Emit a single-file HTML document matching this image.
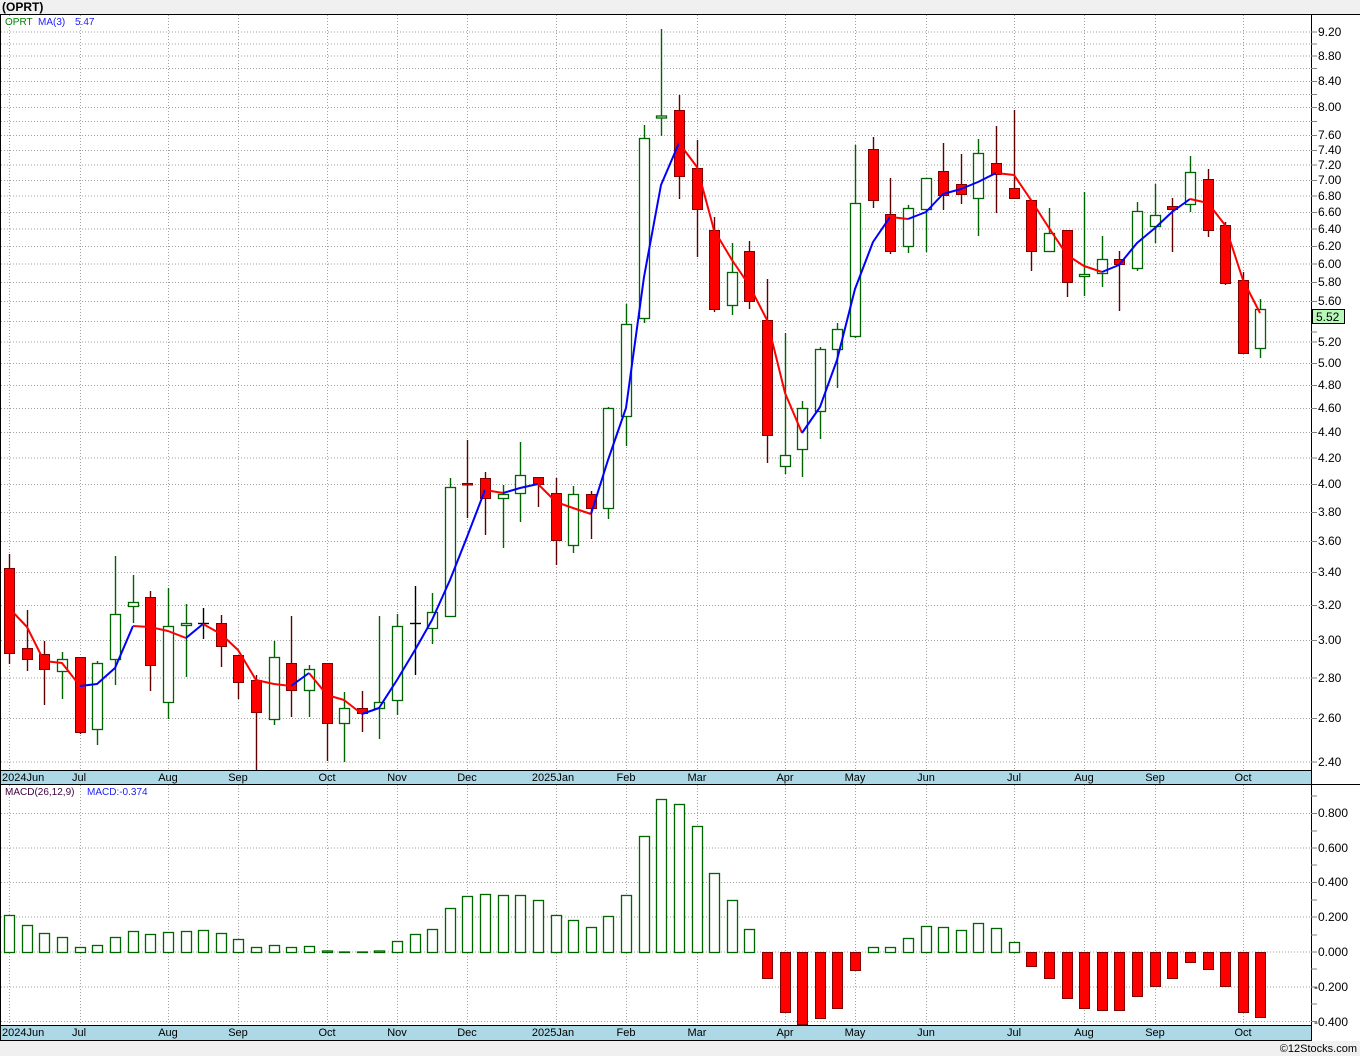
<!DOCTYPE html>
<html><head><meta charset="utf-8"><style>
html,body{margin:0;padding:0;background:#f0f0f0;}
svg{display:block;font-family:"Liberation Sans",sans-serif;}
</style></head><body>
<svg width="1360" height="1056" viewBox="0 0 1360 1056" xmlns="http://www.w3.org/2000/svg">
<rect x="0" y="0" width="1360" height="1056" fill="#f0f0f0"/>
<text x="2" y="11" font-size="12" font-weight="bold" fill="#000">(OPRT)</text>
<rect x="0" y="14" width="1360" height="1027" fill="#fff"/>
<!-- price grid -->
<g stroke="#a0a0a0" stroke-width="1" stroke-dasharray="1,2">
<line x1="1" x2="1311" y1="32" y2="32"/><line x1="1" x2="1311" y1="44" y2="44"/><line x1="1" x2="1311" y1="56" y2="56"/><line x1="1" x2="1311" y1="68.5" y2="68.5"/><line x1="1" x2="1311" y1="81.5" y2="81.5"/><line x1="1" x2="1311" y1="94.5" y2="94.5"/><line x1="1" x2="1311" y1="107.5" y2="107.5"/><line x1="1" x2="1311" y1="121.5" y2="121.5"/><line x1="1" x2="1311" y1="135.5" y2="135.5"/><line x1="1" x2="1311" y1="150.5" y2="150.5"/><line x1="1" x2="1311" y1="165" y2="165"/><line x1="1" x2="1311" y1="180.5" y2="180.5"/><line x1="1" x2="1311" y1="196" y2="196"/><line x1="1" x2="1311" y1="212.5" y2="212.5"/><line x1="1" x2="1311" y1="229" y2="229"/><line x1="1" x2="1311" y1="246.5" y2="246.5"/><line x1="1" x2="1311" y1="264" y2="264"/><line x1="1" x2="1311" y1="282.5" y2="282.5"/><line x1="1" x2="1311" y1="301.5" y2="301.5"/><line x1="1" x2="1311" y1="321.5" y2="321.5"/><line x1="1" x2="1311" y1="342" y2="342"/><line x1="1" x2="1311" y1="363.5" y2="363.5"/><line x1="1" x2="1311" y1="385.5" y2="385.5"/><line x1="1" x2="1311" y1="408.5" y2="408.5"/><line x1="1" x2="1311" y1="432.5" y2="432.5"/><line x1="1" x2="1311" y1="458" y2="458"/><line x1="1" x2="1311" y1="484.5" y2="484.5"/><line x1="1" x2="1311" y1="512.5" y2="512.5"/><line x1="1" x2="1311" y1="541.5" y2="541.5"/><line x1="1" x2="1311" y1="572.5" y2="572.5"/><line x1="1" x2="1311" y1="605.5" y2="605.5"/><line x1="1" x2="1311" y1="640.5" y2="640.5"/><line x1="1" x2="1311" y1="678" y2="678"/><line x1="1" x2="1311" y1="718.5" y2="718.5"/><line x1="1" x2="1311" y1="762" y2="762"/>
<!-- vertical month grid -->
<g>
<line x1="9.5" x2="9.5" y1="15" y2="770"/><line x1="80.5" x2="80.5" y1="15" y2="770"/><line x1="168.5" x2="168.5" y1="15" y2="770"/><line x1="238.5" x2="238.5" y1="15" y2="770"/><line x1="327.5" x2="327.5" y1="15" y2="770"/><line x1="397.5" x2="397.5" y1="15" y2="770"/><line x1="467.5" x2="467.5" y1="15" y2="770"/><line x1="556.5" x2="556.5" y1="15" y2="770"/><line x1="626.5" x2="626.5" y1="15" y2="770"/><line x1="697.5" x2="697.5" y1="15" y2="770"/><line x1="785.5" x2="785.5" y1="15" y2="770"/><line x1="855.5" x2="855.5" y1="15" y2="770"/><line x1="926.5" x2="926.5" y1="15" y2="770"/><line x1="1014.5" x2="1014.5" y1="15" y2="770"/><line x1="1084.5" x2="1084.5" y1="15" y2="770"/><line x1="1155.5" x2="1155.5" y1="15" y2="770"/><line x1="1243.5" x2="1243.5" y1="15" y2="770"/>
<line x1="9.5" x2="9.5" y1="785" y2="1025"/><line x1="80.5" x2="80.5" y1="785" y2="1025"/><line x1="168.5" x2="168.5" y1="785" y2="1025"/><line x1="238.5" x2="238.5" y1="785" y2="1025"/><line x1="327.5" x2="327.5" y1="785" y2="1025"/><line x1="397.5" x2="397.5" y1="785" y2="1025"/><line x1="467.5" x2="467.5" y1="785" y2="1025"/><line x1="556.5" x2="556.5" y1="785" y2="1025"/><line x1="626.5" x2="626.5" y1="785" y2="1025"/><line x1="697.5" x2="697.5" y1="785" y2="1025"/><line x1="785.5" x2="785.5" y1="785" y2="1025"/><line x1="855.5" x2="855.5" y1="785" y2="1025"/><line x1="926.5" x2="926.5" y1="785" y2="1025"/><line x1="1014.5" x2="1014.5" y1="785" y2="1025"/><line x1="1084.5" x2="1084.5" y1="785" y2="1025"/><line x1="1155.5" x2="1155.5" y1="785" y2="1025"/><line x1="1243.5" x2="1243.5" y1="785" y2="1025"/>
</g>
<!-- macd grid -->
<line x1="1" x2="1311" y1="813.5" y2="813.5"/><line x1="1" x2="1311" y1="848" y2="848"/><line x1="1" x2="1311" y1="882.5" y2="882.5"/><line x1="1" x2="1311" y1="917" y2="917"/><line x1="1" x2="1311" y1="952" y2="952"/><line x1="1" x2="1311" y1="987" y2="987"/><line x1="1" x2="1311" y1="1021.5" y2="1021.5"/>
</g>
<!-- legends -->
<text x="5" y="25" font-size="10" fill="#008000">OPRT</text>
<text x="38" y="25" font-size="10" fill="#2020ff">MA(3)</text>
<text x="75" y="25" font-size="10" fill="#2020ff">5.47</text>
<text x="5" y="795" font-size="10" fill="#400040">MACD(26,12,9)</text>
<text x="87" y="795" font-size="10" fill="#2020ff">MACD:-0.374</text>

<!-- candles: wicks -->
<g stroke-width="1.4">
<g stroke="#600000">
<line x1="9.5" x2="9.5" y1="554" y2="664"/><line x1="27.5" x2="27.5" y1="610" y2="671"/><line x1="44.5" x2="44.5" y1="641" y2="705"/><line x1="80.5" x2="80.5" y1="657" y2="734"/><line x1="150.5" x2="150.5" y1="591" y2="691"/><line x1="221.5" x2="221.5" y1="615" y2="667"/><line x1="238.5" x2="238.5" y1="655" y2="699"/><line x1="256.5" x2="256.5" y1="675" y2="770"/><line x1="291.5" x2="291.5" y1="616" y2="717"/><line x1="327.5" x2="327.5" y1="663" y2="761"/><line x1="362.5" x2="362.5" y1="691" y2="732"/><line x1="467.5" x2="467.5" y1="440" y2="518"/><line x1="485.5" x2="485.5" y1="472" y2="535"/><line x1="538.5" x2="538.5" y1="477" y2="507"/><line x1="556.5" x2="556.5" y1="478" y2="565"/><line x1="591.5" x2="591.5" y1="491" y2="539"/><line x1="679.5" x2="679.5" y1="95" y2="199"/><line x1="697.5" x2="697.5" y1="140" y2="257"/><line x1="714.5" x2="714.5" y1="217" y2="312"/><line x1="749.5" x2="749.5" y1="241" y2="309"/><line x1="767.5" x2="767.5" y1="279" y2="463"/><line x1="873.5" x2="873.5" y1="137" y2="208"/><line x1="890.5" x2="890.5" y1="178" y2="254"/><line x1="943.5" x2="943.5" y1="143" y2="210"/><line x1="961.5" x2="961.5" y1="154" y2="204"/><line x1="996.5" x2="996.5" y1="126" y2="213"/><line x1="1014.5" x2="1014.5" y1="110" y2="198"/><line x1="1031.5" x2="1031.5" y1="200" y2="271"/><line x1="1067.5" x2="1067.5" y1="230" y2="297"/><line x1="1119.5" x2="1119.5" y1="251" y2="311"/><line x1="1172.5" x2="1172.5" y1="198" y2="252"/><line x1="1208.5" x2="1208.5" y1="169" y2="237"/><line x1="1225.5" x2="1225.5" y1="222" y2="285"/><line x1="1243.5" x2="1243.5" y1="272" y2="353"/>
</g>
<g stroke="#006400">
<line x1="62.5" x2="62.5" y1="652" y2="699"/><line x1="97.5" x2="97.5" y1="661" y2="745"/><line x1="115.5" x2="115.5" y1="556" y2="685"/><line x1="133.5" x2="133.5" y1="575" y2="623"/><line x1="168.5" x2="168.5" y1="588" y2="719"/><line x1="186.5" x2="186.5" y1="604" y2="677"/><line x1="274.5" x2="274.5" y1="641" y2="725"/><line x1="309.5" x2="309.5" y1="665" y2="717"/><line x1="344.5" x2="344.5" y1="692" y2="762"/><line x1="379.5" x2="379.5" y1="616" y2="739"/><line x1="397.5" x2="397.5" y1="614" y2="715"/><line x1="432.5" x2="432.5" y1="593" y2="644"/><line x1="450.5" x2="450.5" y1="478" y2="616"/><line x1="503.5" x2="503.5" y1="485" y2="548"/><line x1="520.5" x2="520.5" y1="442" y2="522"/><line x1="573.5" x2="573.5" y1="486" y2="553"/><line x1="608.5" x2="608.5" y1="407" y2="519"/><line x1="626.5" x2="626.5" y1="304" y2="446"/><line x1="644.5" x2="644.5" y1="125" y2="323"/><line x1="661.5" x2="661.5" y1="29" y2="136"/><line x1="732.5" x2="732.5" y1="243" y2="315"/><line x1="785.5" x2="785.5" y1="333" y2="474"/><line x1="802.5" x2="802.5" y1="401" y2="477"/><line x1="820.5" x2="820.5" y1="347" y2="439"/><line x1="837.5" x2="837.5" y1="323" y2="388"/><line x1="855.5" x2="855.5" y1="145" y2="338"/><line x1="908.5" x2="908.5" y1="205" y2="253"/><line x1="926.5" x2="926.5" y1="178" y2="252"/><line x1="978.5" x2="978.5" y1="139" y2="236"/><line x1="1049.5" x2="1049.5" y1="208" y2="252"/><line x1="1084.5" x2="1084.5" y1="192" y2="296"/><line x1="1102.5" x2="1102.5" y1="236" y2="287"/><line x1="1137.5" x2="1137.5" y1="202" y2="271"/><line x1="1155.5" x2="1155.5" y1="184" y2="243"/><line x1="1190.5" x2="1190.5" y1="156" y2="212"/><line x1="1260.5" x2="1260.5" y1="299" y2="358"/>
</g>
<g stroke="#000">
<line x1="203.5" x2="203.5" y1="608" y2="639"/><line x1="198" x2="209" y1="623.5" y2="623.5"/>
<line x1="415.5" x2="415.5" y1="586" y2="675"/><line x1="410" x2="421" y1="623.5" y2="623.5"/>
</g>
</g>
<!-- red bodies -->
<g fill="#ff0000" stroke="#800000" stroke-width="1">
<rect x="4.5" y="568.5" width="10" height="85"/><rect x="22.5" y="648.5" width="10" height="11"/><rect x="39.5" y="654.5" width="10" height="15"/><rect x="75.5" y="657.5" width="10" height="75"/><rect x="145.5" y="597.5" width="10" height="68"/><rect x="216.5" y="623.5" width="10" height="23"/><rect x="233.5" y="655.5" width="10" height="27"/><rect x="251.5" y="680.5" width="10" height="32"/><rect x="286.5" y="663.5" width="10" height="27"/><rect x="322.5" y="663.5" width="10" height="60"/><rect x="357.5" y="708.5" width="10" height="5"/><rect x="462.5" y="483.5" width="10" height="1.5"/><rect x="480.5" y="478.5" width="10" height="20"/><rect x="533.5" y="477.5" width="10" height="7"/><rect x="551.5" y="493.5" width="10" height="47"/><rect x="586.5" y="494.5" width="10" height="14"/><rect x="674.5" y="110.5" width="10" height="66"/><rect x="692.5" y="168.5" width="10" height="41"/><rect x="709.5" y="230.5" width="10" height="79"/><rect x="744.5" y="251.5" width="10" height="50"/><rect x="762.5" y="320.5" width="10" height="115"/><rect x="868.5" y="149.5" width="10" height="51"/><rect x="885.5" y="214.5" width="10" height="37"/><rect x="938.5" y="171.5" width="10" height="24"/><rect x="956.5" y="184.5" width="10" height="10"/><rect x="991.5" y="163.5" width="10" height="11"/><rect x="1009.5" y="188.5" width="10" height="10"/><rect x="1026.5" y="200.5" width="10" height="51"/><rect x="1062.5" y="230.5" width="10" height="52"/><rect x="1114.5" y="259.5" width="10" height="5"/><rect x="1167.5" y="206.5" width="10" height="3"/><rect x="1203.5" y="179.5" width="10" height="51"/><rect x="1220.5" y="225.5" width="10" height="58"/><rect x="1238.5" y="280.5" width="10" height="73"/>
</g>
<!-- green hollow bodies -->
<g fill="#fff" stroke="#006400" stroke-width="1.3">
<rect x="57.5" y="659.5" width="10" height="12"/><rect x="92.5" y="663.5" width="10" height="66"/><rect x="110.5" y="614.5" width="10" height="45"/><rect x="128.5" y="602.5" width="10" height="4"/><rect x="163.5" y="626.5" width="10" height="76"/><rect x="181.5" y="623.5" width="10" height="2"/><rect x="269.5" y="657.5" width="10" height="62"/><rect x="304.5" y="669.5" width="10" height="21"/><rect x="339.5" y="708.5" width="10" height="15"/><rect x="374.5" y="702.5" width="10" height="6"/><rect x="392.5" y="626.5" width="10" height="74"/><rect x="427.5" y="612.5" width="10" height="16"/><rect x="445.5" y="487.5" width="10" height="129"/><rect x="498.5" y="494.5" width="10" height="4"/><rect x="515.5" y="475.5" width="10" height="18"/><rect x="568.5" y="494.5" width="10" height="51"/><rect x="603.5" y="408.5" width="10" height="100"/><rect x="621.5" y="324.5" width="10" height="92"/><rect x="639.5" y="138.5" width="10" height="180"/><rect x="656.5" y="116" width="10" height="2"/><rect x="727.5" y="272.5" width="10" height="33"/><rect x="780.5" y="455.5" width="10" height="11"/><rect x="797.5" y="408.5" width="10" height="41"/><rect x="815.5" y="349.5" width="10" height="62"/><rect x="832.5" y="329.5" width="10" height="20"/><rect x="850.5" y="203.5" width="10" height="133"/><rect x="903.5" y="208.5" width="10" height="38"/><rect x="921.5" y="178.5" width="10" height="31"/><rect x="973.5" y="153.5" width="10" height="45"/><rect x="1044.5" y="233.5" width="10" height="18"/><rect x="1079.5" y="274.5" width="10" height="2"/><rect x="1097.5" y="259.5" width="10" height="14"/><rect x="1132.5" y="211.5" width="10" height="57"/><rect x="1150.5" y="215.5" width="10" height="11"/><rect x="1185.5" y="172.5" width="10" height="32"/><rect x="1255.5" y="309.5" width="10" height="39"/>
</g>
<!-- MA line -->
<g fill="none" stroke-width="2" stroke-linejoin="round">
<polyline stroke="#ff0000" points="9,608 27,627 44,661 62,663 80,686"/>
<polyline stroke="#0000ff" points="80,686 97,684 115,668 133,626"/>
<polyline stroke="#ff0000" points="133,626 150,627 168,631 186,638"/>
<polyline stroke="#0000ff" points="186,638 203,624"/>
<polyline stroke="#ff0000" points="203,624 221,634 238,650 256,680 274,684 291,686"/>
<polyline stroke="#0000ff" points="291,686 309,673"/>
<polyline stroke="#ff0000" points="309,673 327,695 344,700 362,714"/>
<polyline stroke="#0000ff" points="362,714 379,708 397,680 415,650 432,620 450,580 467,537 485,490"/>
<polyline stroke="#ff0000" points="485,490 503,493"/>
<polyline stroke="#0000ff" points="503,493 520,488 538,484"/>
<polyline stroke="#ff0000" points="538,484 556,502 573,508 591,514"/>
<polyline stroke="#0000ff" points="591,514 608,460 626,408 644,277 661,185 679,143"/>
<polyline stroke="#ff0000" points="679,143 697,167 714,230 732,260 749,285 767,320 785,393 802,433"/>
<polyline stroke="#0000ff" points="802,433 820,407 837,360 855,289 873,242 890,217"/>
<polyline stroke="#ff0000" points="890,217 908,219"/>
<polyline stroke="#0000ff" points="908,219 926,212 943,194 961,189 978,182 996,173"/>
<polyline stroke="#ff0000" points="996,173 1014,175 1031,200 1049,228 1067,255 1084,266 1102,272"/>
<polyline stroke="#0000ff" points="1102,272 1119,265 1137,243 1155,228 1172,212 1190,199"/>
<polyline stroke="#ff0000" points="1190,199 1208,203 1225,225 1243,280 1260,313"/>
</g>

<!-- MACD bars green -->
<g fill="#fff" stroke="#006400" stroke-width="1.3">
<rect x="4.5" y="915.5" width="10" height="37"/><rect x="22.5" y="925.5" width="10" height="27"/><rect x="39.5" y="933.5" width="10" height="19"/><rect x="57.5" y="937.5" width="10" height="15"/><rect x="75.5" y="947.5" width="10" height="5"/><rect x="92.5" y="945.5" width="10" height="7"/><rect x="110.5" y="937.5" width="10" height="15"/><rect x="128.5" y="931.5" width="10" height="21"/><rect x="145.5" y="934.5" width="10" height="18"/><rect x="163.5" y="932.5" width="10" height="20"/><rect x="181.5" y="931.5" width="10" height="21"/><rect x="198.5" y="930.5" width="10" height="22"/><rect x="216.5" y="933.5" width="10" height="19"/><rect x="233.5" y="939.5" width="10" height="13"/><rect x="251.5" y="947.5" width="10" height="5"/><rect x="269.5" y="945.5" width="10" height="7"/><rect x="286.5" y="947.5" width="10" height="5"/><rect x="304.5" y="946.5" width="10" height="6"/><rect x="322.5" y="951" width="10" height="1.5"/><rect x="339.5" y="952" width="10" height="0.5"/><rect x="357.5" y="952" width="10" height="0.5"/><rect x="374.5" y="951" width="10" height="1.5"/><rect x="392.5" y="941.5" width="10" height="11"/><rect x="410.5" y="934.5" width="10" height="18"/><rect x="427.5" y="929.5" width="10" height="23"/><rect x="445.5" y="908.5" width="10" height="44"/><rect x="462.5" y="896.5" width="10" height="56"/><rect x="480.5" y="894.5" width="10" height="58"/><rect x="498.5" y="895.5" width="10" height="57"/><rect x="515.5" y="895.5" width="10" height="57"/><rect x="533.5" y="900.5" width="10" height="52"/><rect x="551.5" y="915.5" width="10" height="37"/><rect x="568.5" y="920.5" width="10" height="32"/><rect x="586.5" y="927.5" width="10" height="25"/><rect x="603.5" y="916.5" width="10" height="36"/><rect x="621.5" y="895.5" width="10" height="57"/><rect x="639.5" y="836.5" width="10" height="116"/><rect x="656.5" y="799.5" width="10" height="153"/><rect x="674.5" y="804.5" width="10" height="148"/><rect x="692.5" y="826.5" width="10" height="126"/><rect x="709.5" y="873.5" width="10" height="79"/><rect x="727.5" y="900.5" width="10" height="52"/><rect x="744.5" y="929.5" width="10" height="23"/><rect x="868.5" y="947.5" width="10" height="5"/><rect x="885.5" y="947.5" width="10" height="5"/><rect x="903.5" y="938.5" width="10" height="14"/><rect x="921.5" y="926.5" width="10" height="26"/><rect x="938.5" y="927.5" width="10" height="25"/><rect x="956.5" y="930.5" width="10" height="22"/><rect x="973.5" y="923.5" width="10" height="29"/><rect x="991.5" y="928.5" width="10" height="24"/><rect x="1009.5" y="942.5" width="10" height="10"/>
</g>
<g fill="#ff0000" stroke="#800000" stroke-width="1">
<rect x="762.5" y="952.5" width="10" height="26"/><rect x="780.5" y="952.5" width="10" height="60"/><rect x="797.5" y="952.5" width="10" height="72"/><rect x="815.5" y="952.5" width="10" height="66"/><rect x="832.5" y="952.5" width="10" height="56"/><rect x="850.5" y="952.5" width="10" height="18"/><rect x="1026.5" y="952.5" width="10" height="14"/><rect x="1044.5" y="952.5" width="10" height="26"/><rect x="1062.5" y="952.5" width="10" height="46"/><rect x="1079.5" y="952.5" width="10" height="56"/><rect x="1097.5" y="952.5" width="10" height="58"/><rect x="1114.5" y="952.5" width="10" height="58"/><rect x="1132.5" y="952.5" width="10" height="44"/><rect x="1150.5" y="952.5" width="10" height="34"/><rect x="1167.5" y="952.5" width="10" height="26"/><rect x="1185.5" y="952.5" width="10" height="10"/><rect x="1203.5" y="952.5" width="10" height="17"/><rect x="1220.5" y="952.5" width="10" height="34"/><rect x="1238.5" y="952.5" width="10" height="60"/><rect x="1255.5" y="952.5" width="10" height="65"/>
</g>

<!-- month strips -->
<rect x="0" y="770" width="1311" height="14" fill="#add8e6"/>
<rect x="0" y="1025" width="1311" height="15" fill="#add8e6"/>
<g stroke="#000" stroke-width="1">
<line x1="0" x2="1360" y1="14.5" y2="14.5"/>
<line x1="0.5" x2="0.5" y1="14" y2="1041"/>
<line x1="1311.5" x2="1311.5" y1="14" y2="1041"/>
<line x1="0" x2="1311" y1="770.5" y2="770.5"/>
<line x1="0" x2="1360" y1="784.5" y2="784.5"/>
<line x1="0" x2="1311" y1="1025.5" y2="1025.5"/>
<line x1="0" x2="1311" y1="1040.5" y2="1040.5"/>
</g>
<g font-size="11" fill="#000" text-anchor="middle">
<text x="2" y="781" text-anchor="start">2024Jun</text><text x="79" y="781">Jul</text><text x="168" y="781">Aug</text><text x="238" y="781">Sep</text><text x="327" y="781">Oct</text><text x="397" y="781">Nov</text><text x="467" y="781">Dec</text><text x="553" y="781">2025Jan</text><text x="626" y="781">Feb</text><text x="697" y="781">Mar</text><text x="785" y="781">Apr</text><text x="855" y="781">May</text><text x="926" y="781">Jun</text><text x="1014" y="781">Jul</text><text x="1084" y="781">Aug</text><text x="1155" y="781">Sep</text><text x="1243" y="781">Oct</text>
<text x="2" y="1036" text-anchor="start">2024Jun</text><text x="79" y="1036">Jul</text><text x="168" y="1036">Aug</text><text x="238" y="1036">Sep</text><text x="327" y="1036">Oct</text><text x="397" y="1036">Nov</text><text x="467" y="1036">Dec</text><text x="553" y="1036">2025Jan</text><text x="626" y="1036">Feb</text><text x="697" y="1036">Mar</text><text x="785" y="1036">Apr</text><text x="855" y="1036">May</text><text x="926" y="1036">Jun</text><text x="1014" y="1036">Jul</text><text x="1084" y="1036">Aug</text><text x="1155" y="1036">Sep</text><text x="1243" y="1036">Oct</text>
</g>
<!-- axis ticks -->
<g stroke="#808080" stroke-width="1">
<line x1="1311" x2="1317" y1="32" y2="32"/><line x1="1311" x2="1317" y1="44" y2="44"/><line x1="1311" x2="1317" y1="56" y2="56"/><line x1="1311" x2="1317" y1="68.5" y2="68.5"/><line x1="1311" x2="1317" y1="81.5" y2="81.5"/><line x1="1311" x2="1317" y1="94.5" y2="94.5"/><line x1="1311" x2="1317" y1="107.5" y2="107.5"/><line x1="1311" x2="1317" y1="121.5" y2="121.5"/><line x1="1311" x2="1317" y1="135.5" y2="135.5"/><line x1="1311" x2="1317" y1="150.5" y2="150.5"/><line x1="1311" x2="1317" y1="165" y2="165"/><line x1="1311" x2="1317" y1="180.5" y2="180.5"/><line x1="1311" x2="1317" y1="196" y2="196"/><line x1="1311" x2="1317" y1="212.5" y2="212.5"/><line x1="1311" x2="1317" y1="229" y2="229"/><line x1="1311" x2="1317" y1="246.5" y2="246.5"/><line x1="1311" x2="1317" y1="264" y2="264"/><line x1="1311" x2="1317" y1="282.5" y2="282.5"/><line x1="1311" x2="1317" y1="301.5" y2="301.5"/><line x1="1311" x2="1317" y1="332" y2="332"/><line x1="1311" x2="1317" y1="342" y2="342"/><line x1="1311" x2="1317" y1="363.5" y2="363.5"/><line x1="1311" x2="1317" y1="385.5" y2="385.5"/><line x1="1311" x2="1317" y1="408.5" y2="408.5"/><line x1="1311" x2="1317" y1="432.5" y2="432.5"/><line x1="1311" x2="1317" y1="458" y2="458"/><line x1="1311" x2="1317" y1="484.5" y2="484.5"/><line x1="1311" x2="1317" y1="512.5" y2="512.5"/><line x1="1311" x2="1317" y1="541.5" y2="541.5"/><line x1="1311" x2="1317" y1="572.5" y2="572.5"/><line x1="1311" x2="1317" y1="605.5" y2="605.5"/><line x1="1311" x2="1317" y1="640.5" y2="640.5"/><line x1="1311" x2="1317" y1="678" y2="678"/><line x1="1311" x2="1317" y1="718.5" y2="718.5"/><line x1="1311" x2="1317" y1="762" y2="762"/>
<line x1="1311" x2="1317" y1="796" y2="796"/><line x1="1311" x2="1317" y1="813.5" y2="813.5"/><line x1="1311" x2="1317" y1="831" y2="831"/><line x1="1311" x2="1317" y1="848" y2="848"/><line x1="1311" x2="1317" y1="865" y2="865"/><line x1="1311" x2="1317" y1="882.5" y2="882.5"/><line x1="1311" x2="1317" y1="900" y2="900"/><line x1="1311" x2="1317" y1="917" y2="917"/><line x1="1311" x2="1317" y1="935" y2="935"/><line x1="1311" x2="1317" y1="952" y2="952"/><line x1="1311" x2="1317" y1="969" y2="969"/><line x1="1311" x2="1317" y1="987" y2="987"/><line x1="1311" x2="1317" y1="1004" y2="1004"/><line x1="1311" x2="1317" y1="1021.5" y2="1021.5"/>
</g>
<g font-size="12" fill="#000">
<text x="1318" y="36">9.20</text><text x="1318" y="60">8.80</text><text x="1318" y="85">8.40</text><text x="1318" y="111">8.00</text><text x="1318" y="139">7.60</text><text x="1318" y="154">7.40</text><text x="1318" y="169">7.20</text><text x="1318" y="184">7.00</text><text x="1318" y="200">6.80</text><text x="1318" y="216">6.60</text><text x="1318" y="233">6.40</text><text x="1318" y="250">6.20</text><text x="1318" y="268">6.00</text><text x="1318" y="286">5.80</text><text x="1318" y="305">5.60</text><text x="1318" y="346">5.20</text><text x="1318" y="367">5.00</text><text x="1318" y="389">4.80</text><text x="1318" y="412">4.60</text><text x="1318" y="436">4.40</text><text x="1318" y="462">4.20</text><text x="1318" y="488">4.00</text><text x="1318" y="516">3.80</text><text x="1318" y="545">3.60</text><text x="1318" y="576">3.40</text><text x="1318" y="609">3.20</text><text x="1318" y="644">3.00</text><text x="1318" y="682">2.80</text><text x="1318" y="722">2.60</text><text x="1318" y="766">2.40</text>
<text x="1318" y="817">0.800</text><text x="1318" y="852">0.600</text><text x="1318" y="886">0.400</text><text x="1318" y="921">0.200</text><text x="1318" y="956">0.000</text><text x="1314" y="991">-0.200</text><text x="1314" y="1026">-0.400</text>
</g>
<rect x="1312.5" y="309.5" width="32" height="14" fill="#b8f8b8" stroke="#000"/>
<text x="1316" y="321" font-size="12" fill="#000">5.52</text>
<text x="1357" y="1052" font-size="11" fill="#000" text-anchor="end">©12Stocks.com</text>
</svg>
</body></html>
